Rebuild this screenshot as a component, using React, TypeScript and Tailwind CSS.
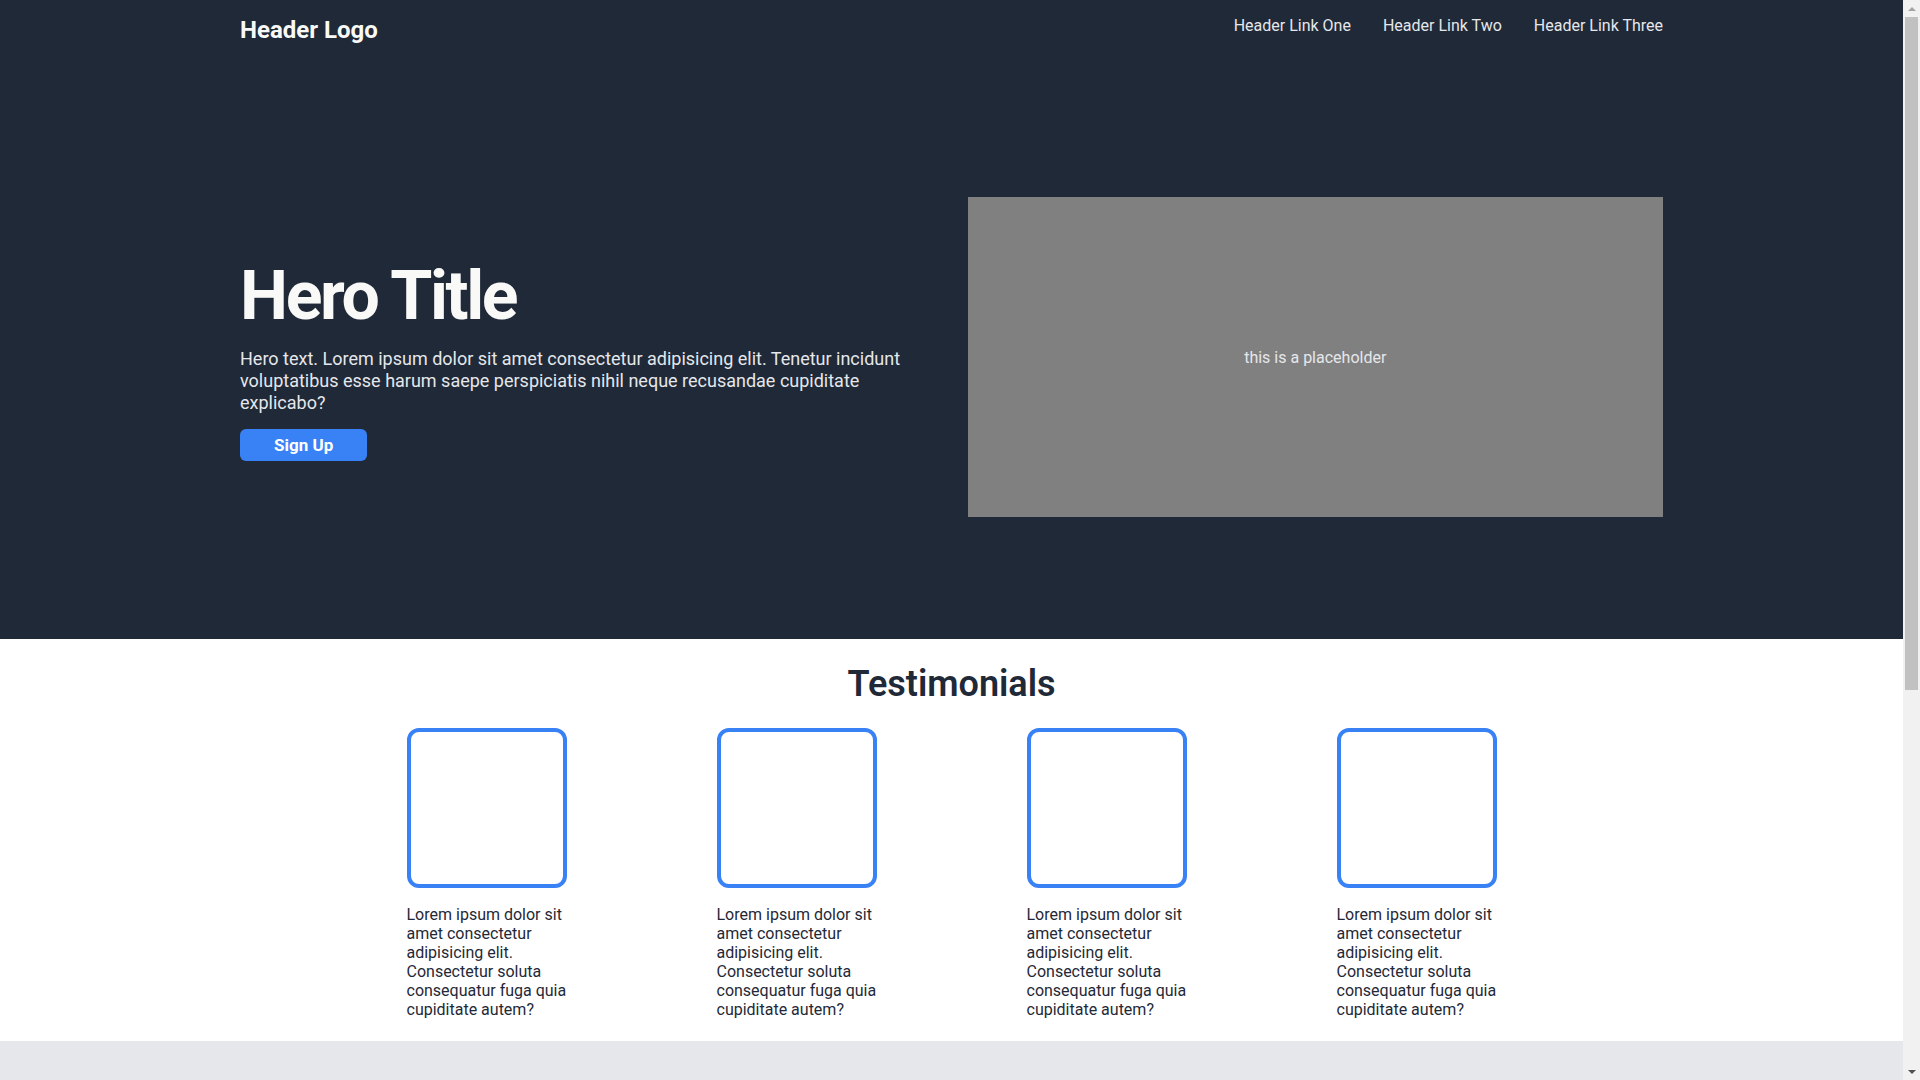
import React from 'react';

const LINKS = ['Header Link One', 'Header Link Two', 'Header Link Three'];

const CARD_TEXT =
  'Lorem ipsum dolor sit amet consectetur adipisicing elit. Consectetur soluta consequatur fuga quia cupiditate autem?';

const Header: React.FC = () => (
  <header className="flex h-[75px] items-start justify-between px-60 pt-4">
    <div className="text-2xl font-bold leading-[normal] text-[#f9faf8]">Header Logo</div>
    <nav className="flex gap-8">
      {LINKS.map((link) => (
        <a key={link} href="#" className="text-base leading-[normal] text-[#e5e7eb]">
          {link}
        </a>
      ))}
    </nav>
  </header>
);

const Hero: React.FC = () => (
  <section className="flex items-center gap-8 px-60 py-[122px]">
    <div className="flex-1">
      <h1 className="text-[68px] font-bold leading-[84px] tracking-[-0.035em] text-[#f9faf8]">Hero Title</h1>
      <p className="mt-[10px] text-lg leading-[22px] text-[#e5e7eb]">
        Hero text. Lorem ipsum dolor sit amet consectetur adipisicing elit. Tenetur incidunt
        voluptatibus esse harum saepe perspiciatis nihil neque recusandae cupiditate explicabo?
      </p>
      <button className="mt-[15px] rounded-md bg-[#3882f6] px-[34px] py-1.5 text-[17px] font-bold leading-[normal] text-white">
        Sign Up
      </button>
    </div>
    <div className="flex h-80 flex-1 items-center justify-center bg-[#808080]">
      <span className="text-base leading-[normal] text-[#e5e7eb]">this is a placeholder</span>
    </div>
  </section>
);

const Testimonials: React.FC = () => (
  <section className="bg-white pb-[22px] pt-6">
    <h2 className="text-center text-4xl font-semibold leading-[normal] text-[#1f2937]">Testimonials</h2>
    <div className="mt-[23px] flex justify-center gap-[150px]">
      {[0, 1, 2, 3].map((i) => (
        <div key={i} className="w-40">
          <div className="h-40 w-40 rounded-xl border-4 border-[#3882f6]" />
          <p className="mt-[17px] text-base leading-[normal] text-[#1f2937]">{CARD_TEXT}</p>
        </div>
      ))}
    </div>
  </section>
);

const Quote: React.FC = () => (
  <section className="bg-[#e5e7eb] px-[400px] py-24">
    <p className="text-4xl font-light italic leading-[normal] text-[#1f2937]">
      Lorem ipsum dolor sit amet consectetur adipisicing elit. Quisquam voluptatibus illo
      tempore sequi molestias, quod doloribus.
    </p>
    <p className="mt-4 text-right text-2xl font-bold leading-[normal] text-[#1f2937]">
      -Thor, God of Thunder
    </p>
  </section>
);

const CallToAction: React.FC = () => (
  <section className="bg-white px-60 py-12">
    <div className="flex items-center justify-between rounded-lg bg-[#3882f6] px-36 py-10">
      <div className="text-[#f9faf8]">
        <h3 className="text-2xl font-bold leading-[normal]">Call to action! It's time!</h3>
        <p className="leading-[normal]">Sign up for our product by clicking that button right over there!</p>
      </div>
      <button className="rounded-md border-2 border-[#f9faf8] px-8 py-1 font-bold text-[#f9faf8]">
        Sign Up
      </button>
    </div>
  </section>
);

const Footer: React.FC = () => (
  <footer className="bg-[#1f2937] py-7 text-center leading-[normal] text-[#e5e7eb]">
    Copyright © The Odin Project 2021
  </footer>
);

// browser scrollbar as seen in the screenshot
const Scrollbar: React.FC = () => (
  <div className="fixed right-0 top-0 flex h-screen w-[17px] flex-col bg-[#f1f1f1]">
    <div className="flex h-[17px] items-center justify-center">
      <div className="h-0 w-0 border-x-[4px] border-b-[4px] border-x-transparent border-b-[#a3a3a3]" />
    </div>
    <div className="mx-[2px] h-[673px] bg-[#c1c1c1]" />
    <div className="flex-1" />
    <div className="flex h-[17px] items-center justify-center">
      <div className="h-0 w-0 border-x-[4px] border-t-[4px] border-x-transparent border-t-[#505050]" />
    </div>
  </div>
);

export default function App() {
  return (
    <div className="min-h-screen pr-[17px] font-['Roboto',sans-serif]">
      <div className="bg-[#1f2937]">
        <Header />
        <Hero />
      </div>
      <Testimonials />
      <Quote />
      <CallToAction />
      <Footer />
      <Scrollbar />
    </div>
  );
}
